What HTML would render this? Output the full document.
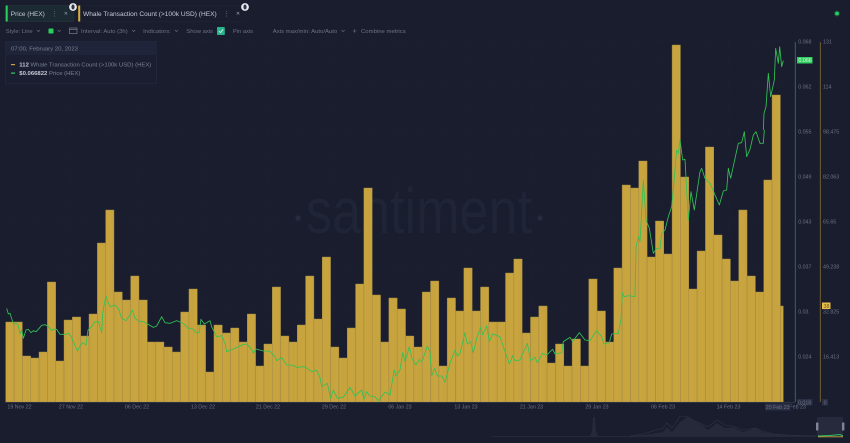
<!DOCTYPE html>
<html>
<head>
<meta charset="utf-8">
<style>
html,body{margin:0;padding:0;background:#191d2e;width:850px;height:443px;overflow:hidden}
#w{position:relative;width:850px;height:443px;filter:blur(.35px)}
svg{position:absolute;left:0;top:0}
text{font-family:"Liberation Sans",sans-serif}
.a{font-size:5.3px;fill:#6d7286}
.t{font-size:5.9px;fill:#6d7286}
.c{fill:none;stroke:#6d7286;stroke-width:.6}
</style>
</head>
<body>
<div id="w">
<svg width="850" height="443" viewBox="0 0 850 443" xmlns="http://www.w3.org/2000/svg">
<defs>
<pattern id="st" patternUnits="userSpaceOnUse" width="0.125" height="10">
<rect width="0.125" height="10" fill="#cba63f"/>
<rect width="0.025" height="10" fill="#bd9a3d"/>
</pattern>
</defs>
<rect width="850" height="443" fill="#191d2e"/>

<!-- grid -->
<g stroke="#20243a" stroke-width=".6" stroke-dasharray="1.5 1.5" fill="none">
<path d="M5 41H795M5 86H795M5 131H795M5 176H795M5 221H795M5 266H795M5 311H795M5 356H795"/>
<path d="M71 41V402M137 41V402M203 41V402M268 41V402M334 41V402M400 41V402M466 41V402M531.5 41V402M597 41V402M663 41V402M728.5 41V402"/>
</g>

<!-- watermark -->
<text x="306" y="233" font-size="64" textLength="226" lengthAdjust="spacingAndGlyphs" fill="#202437">santiment</text>
<circle cx="298" cy="218" r="2.6" fill="#272b3e"/>
<circle cx="540" cy="218" r="2.6" fill="#272b3e"/>

<!-- bars -->
<g transform="translate(5.7,0) scale(8.33,1)">
<path fill="url(#st)" stroke="#a08a45" stroke-width=".45" vector-effect="non-scaling-stroke" d="
M0 322H1V402H0zM1 322H2V402H1zM2 356H3V402H2zM3 358H4V402H3zM4 352H5V402H4zM5 282H6V402H5zM6 361H7V402H6zM7 320H8V402H7zM8 317H9V402H8zM9 336H10V402H9z
M10 314H11V402H10zM11 243H12V402H11zM12 210H13V402H12zM13 292H14V402H13zM14 300H15V402H14zM15 276H16V402H15zM16 300H17V402H16zM17 342H18V402H17zM18 342H19V402H18zM19 347H20V402H19z
M20 352H21V402H20zM21 312H22V402H21zM22 289H23V402H22zM23 325H24V402H23zM24 372H25V402H24zM25 325H26V402H25zM26 333H27V402H26zM27 328H28V402H27zM28 342H29V402H28zM29 314H30V402H29z
M30 366H31V402H30zM31 344H32V402H31zM32 287H33V402H32zM33 336H34V402H33zM34 342H35V402H34zM35 325H36V402H35zM36 276H37V402H36zM37 319H38V402H37zM38 257H39V402H38zM39 347H40V402H39z
M40 358H41V402H40zM41 328H42V402H41zM42 284H43V402H42zM43 188H44V402H43zM44 295H45V402H44zM45 342H46V402H45zM46 298H47V402H46zM47 309H48V402H47zM48 336H49V402H48zM49 347H50V402H49z
M50 292H51V402H50zM51 281H52V402H51zM52 366H53V402H52zM53 298H54V402H53zM54 311H55V402H54zM55 268H56V402H55zM56 311H57V402H56zM57 287H58V402H57zM58 322H59V402H58zM59 322H60V402H59z
M60 273H61V402H60zM61 259H62V402H61zM62 333H63V402H62zM63 317H64V402H63zM64 306H65V402H64zM65 363H66V402H65zM66 344H67V402H66zM67 366H68V402H67zM68 339H69V402H68zM69 366H70V402H69z
M70 279H71V402H70zM71 311H72V402H71zM72 342H73V402H72zM73 268H74V402H73zM74 185H75V402H74zM75 188H76V402H75zM76 161H77V402H76zM77 257H78V402H77zM78 221H79V402H78zM79 254H80V402H79z
M80 45H81V402H80zM81 177H82V402H81zM82 289H83V402H82zM83 251H84V402H83zM84 147H85V402H84zM85 235H86V402H85zM86 259H87V402H86zM87 281H88V402H87zM88 210H89V402H88zM89 276H90V402H89z
M90 292H91V402H90zM91 180H92V402H91zM92 95H93V402H92zM93 306H93.35V402H93z"/>
</g>
<path d="M5 402.3H795" stroke="#3b3f50" stroke-width=".7"/>

<!-- price line: coordinates in 3x crop space -->
<g fill="none" stroke="#32c255" stroke-width=".85" stroke-linejoin="round">
<polyline vector-effect="non-scaling-stroke" transform="translate(0,290) scale(.33333)" points="20,55 25,72 30,70 38,95 42,102 50,100 55,107 60,132 65,120 70,145 78,120 85,118 93,128 100,122 108,125 115,118 125,106 135,104 145,110 155,122 160,118 170,118 180,133 195,133 207,130 215,143 222,160 232,183 240,168 248,158 258,165 264,120 275,110 285,95 295,95 305,128 308,70 313,40 318,17 323,35 330,50 345,45 355,55 365,85 378,92 390,75 397,60 405,85 420,95 430,95 445,103 460,112 470,108 485,80 495,98 510,100 530,92 550,100 565,115 580,117 588,128 597,128 603,88 613,102 630,92"/>
<polyline vector-effect="non-scaling-stroke" transform="translate(210,290) scale(.33333)" points="0,92 5,110 20,140 35,137 45,160 50,185 58,182 75,175 95,165 110,162 125,178 130,190 138,177 160,183 180,184 195,200 200,212 215,203 230,225 250,226 260,232 285,230 305,245 320,240 330,262 335,290 352,280 362,325 370,300 382,325 400,322 420,292 435,318 455,300 462,328 470,305 480,318 495,320 505,332 525,306 540,315 553,240 558,258 570,240 578,188 585,215 598,170 606,205 618,225 630,205"/>
<polyline vector-effect="non-scaling-stroke" transform="translate(420,290) scale(.33333)" points="0,215 8,210 22,168 30,185 35,258 44,235 52,258 65,258 75,277 90,220 105,180 112,198 120,190 135,128 142,162 152,155 160,188 170,145 182,112 188,135 200,108 208,155 218,132 240,140 255,185 268,222 278,197 285,212 300,210 322,160 332,212 345,202 352,218 368,190 380,195 398,178 405,192 425,188 430,155 450,142 458,155 478,128 495,150 510,152 530,122 545,140 552,162 568,158 575,132 595,130 603,90 607,10"/>
<polyline vector-effect="non-scaling-stroke" transform="translate(610,130) scale(.33333)" points="37,487 42,500 55,497 75,500 78,350 85,320 90,335 100,150 108,270 118,295 130,370 140,355 150,355 155,310 165,300 175,260 185,230 192,155 200,60 205,70 210,30 218,90 225,88 230,180 235,270 243,185 253,240 270,125 275,115 285,145 300,160 315,195 328,225 340,183 350,180 355,115 362,145 385,40 395,38 403,5 410,80 420,58 430,15 438,5 450,40 460,40 463,0"/>
<polyline vector-effect="non-scaling-stroke" transform="translate(640,0) scale(.33333)" points="370,390 372,340 378,320 385,220 392,290 403,240 407,145 415,190 419,140 425,200 430,182"/>
</g>

<!-- axes -->
<path d="M795.3 42V402" stroke="#1f7f4a" stroke-width=".9"/>
<path d="M820.3 42V402" stroke="#7a6431" stroke-width=".9"/>
<text class="a" x="798.2" y="43.3">0.068</text>
<text class="a" x="798.2" y="88.3">0.062</text>
<text class="a" x="798.2" y="133.3">0.055</text>
<text class="a" x="798.2" y="178.3">0.049</text>
<text class="a" x="798.2" y="223.3">0.043</text>
<text class="a" x="798.2" y="268.3">0.037</text>
<text class="a" x="798.2" y="313.3">0.03</text>
<text class="a" x="798.2" y="358.3">0.024</text>
<text class="a" x="823" y="43.3">131</text>
<text class="a" x="823" y="88.3">114</text>
<text class="a" x="823" y="133.3">98.475</text>
<text class="a" x="823" y="178.3">82.063</text>
<text class="a" x="823" y="223.3">65.65</text>
<text class="a" x="823" y="268.3">49.238</text>
<text class="a" x="823" y="313.3">32.825</text>
<text class="a" x="823" y="358.3">16.413</text>
<rect x="797" y="57" width="15.5" height="6.5" fill="#2fcf5e"/>
<text x="798.5" y="62.2" font-size="5.3" fill="#d6f5df">0.066</text>
<rect x="822" y="302.5" width="8.5" height="6.5" fill="#e8c04a"/>
<text x="823.5" y="307.8" font-size="5.3" fill="#6b5520">38</text>
<rect x="797" y="399" width="15.5" height="6.5" fill="#2a2f45"/>
<text class="a" x="798" y="404.3">0.018</text>
<rect x="822" y="399" width="6" height="6.5" fill="#2a2f45"/>
<text class="a" x="823.6" y="404.3">0</text>

<!-- dates -->
<g text-anchor="middle">
<text class="a" x="19.5" y="408.6">19 Nov 22</text>
<text class="a" x="71" y="408.6">27 Nov 22</text>
<text class="a" x="137" y="408.6">06 Dec 22</text>
<text class="a" x="203" y="408.6">13 Dec 22</text>
<text class="a" x="268" y="408.6">21 Dec 22</text>
<text class="a" x="334" y="408.6">29 Dec 22</text>
<text class="a" x="400" y="408.6">06 Jan 23</text>
<text class="a" x="466" y="408.6">13 Jan 23</text>
<text class="a" x="531.5" y="408.6">21 Jan 23</text>
<text class="a" x="597" y="408.6">29 Jan 23</text>
<text class="a" x="663" y="408.6">06 Feb 23</text>
<text class="a" x="728.5" y="408.6">14 Feb 23</text>
<text class="a" x="794" y="408.6">22 Feb 23</text>
<rect x="765" y="403.5" width="25.5" height="7" fill="#2a2f45"/>
<text class="a" x="777.7" y="408.8">20 Feb 23</text>
</g>

<!-- minimap -->
<path fill="#252939" d="M492 436H590L592 431L593 417L595 417L596 431L598 436H630L643 435L663 432L667 427L672 432L680 422L687 417L693 420L702 425L708 430L717 423L725 428L733 427L743 432L755 428L763 432L773 434L787 435L817 436V437H492z"/>
<path fill="none" stroke="#2f3448" stroke-width=".6" d="M630 436L643 434L663 428L667 423L672 428L680 416L687 416.5L693 420L702 424L708 427L717 420L725 425L733 426L743 430L755 428L763 431L773 434L787 435L817 436"/>
<rect x="817" y="417" width="26" height="19.5" fill="#262a3c"/>
<path d="M818 436L830 435.5L840 434.5L843 436" stroke="#2fc45a" stroke-width="1" fill="none"/>
<path d="M818 436.8H843" stroke="#c9a23f" stroke-width=".9"/>
<rect x="816" y="422.5" width="2.4" height="8" rx=".6" fill="#7f8498"/>
<rect x="842" y="422.5" width="2.4" height="8" rx=".6" fill="#7f8498"/>

<!-- tabs -->
<rect x="5.5" y="5.5" width="68.5" height="16" rx="1.5" fill="#1c2a33" stroke="#20353a" stroke-width=".7"/>
<rect x="5.7" y="5.5" width="2" height="16" fill="#2bd05c"/>
<text x="10.8" y="16" font-size="6.4" textLength="34" lengthAdjust="spacingAndGlyphs" fill="#c6cad6">Price (HEX)</text>
<g fill="#6d7286"><circle cx="54.6" cy="11.2" r=".5"/><circle cx="54.6" cy="13.6" r=".5"/><circle cx="54.6" cy="16" r=".5"/></g>
<path d="M64.6 11.9l2.6 2.6m0-2.6l-2.6 2.6" stroke="#8a8fa2" stroke-width=".6"/>
<rect x="78" y="5.5" width="167" height="16" rx="1.5" fill="#191d2e" stroke="#1f2334" stroke-width=".7"/>
<rect x="78.2" y="5.5" width="2" height="16" fill="#d9ad3e"/>
<text x="83" y="16" font-size="6.6" textLength="133.7" lengthAdjust="spacingAndGlyphs" fill="#c6cad6">Whale Transaction Count (&gt;100k USD) (HEX)</text>
<g fill="#6d7286"><circle cx="226.6" cy="11.2" r=".5"/><circle cx="226.6" cy="13.6" r=".5"/><circle cx="226.6" cy="16" r=".5"/></g>
<path d="M236.7 11.9l2.6 2.6m0-2.6l-2.6 2.6" stroke="#8a8fa2" stroke-width=".6"/>
<circle cx="73" cy="7" r="3.9" fill="#e8e9ee"/>
<ellipse cx="73" cy="7" rx="1.6" ry="2.5" fill="#31354a"/>
<circle cx="245" cy="7" r="3.9" fill="#e8e9ee"/>
<ellipse cx="245" cy="7" rx="1.6" ry="2.5" fill="#31354a"/>
<circle cx="837" cy="13.5" r="3" fill="#1c7a44" opacity=".5"/>
<circle cx="837" cy="13.5" r="1.9" fill="#22d05c"/>

<!-- toolbar -->
<text class="t" x="5.8" y="33.1" textLength="26.9" lengthAdjust="spacingAndGlyphs">Style: Line</text>
<path class="c" d="M36.8 30l1.6 1.6L40 30"/>
<rect x="48.5" y="28.5" width="5" height="5" rx=".8" fill="#2bd05c"/>
<path class="c" d="M57.6 30l1.6 1.6L60.8 30"/>
<rect x="69.5" y="28" width="7.5" height="5.6" fill="none" stroke="#858a9c" stroke-width=".6"/>
<path d="M69.5 29.6H77" stroke="#858a9c" stroke-width=".6"/>
<text class="t" x="81" y="33.1" textLength="46.7" lengthAdjust="spacingAndGlyphs">Interval: Auto (3h)</text>
<path class="c" d="M132 30l1.6 1.6L135.2 30"/>
<text class="t" x="143.2" y="33.1" textLength="27.8" lengthAdjust="spacingAndGlyphs">Indicators:</text>
<path class="c" d="M174.8 30l1.6 1.6L178 30"/>
<text class="t" x="186.3" y="33.1" textLength="26.7" lengthAdjust="spacingAndGlyphs">Show axis</text>
<rect x="217" y="27" width="7.8" height="8" rx=".8" fill="#27b58a"/>
<path d="M219 31l1.6 1.6 2.4-3.2" fill="none" stroke="#e8f7f0" stroke-width=".8"/>
<text class="t" x="233" y="33.1" textLength="20" lengthAdjust="spacingAndGlyphs">Pin axis</text>
<text class="t" x="272.8" y="33.1" textLength="64.4" lengthAdjust="spacingAndGlyphs">Axis max/min: Auto/Auto</text>
<path class="c" d="M341.5 30l1.6 1.6L344.7 30"/>
<path class="c" d="M353 31h3.4M354.7 29.3v3.4"/>
<text class="t" x="361" y="33.1" textLength="44.7" lengthAdjust="spacingAndGlyphs">Combine metrics</text>

<!-- tooltip -->
<rect x="5.5" y="41.3" width="151" height="42" fill="#1a1e30" stroke="#252a3e" stroke-width=".7"/>
<rect x="5.8" y="41.6" width="150.4" height="13.5" fill="#20243a"/>
<text x="11" y="50.5" font-size="5.9" textLength="67" lengthAdjust="spacingAndGlyphs" fill="#7b8094">07:00, February 20, 2023</text>
<rect x="11" y="64" width="4" height="1.2" fill="#c9a23f"/>
<text x="19.3" y="66.7" font-size="5.9" textLength="132" lengthAdjust="spacingAndGlyphs" fill="#7b8094"><tspan fill="#c6cad6" font-weight="bold">112</tspan> Whale Transaction Count (&gt;100k USD) (HEX)</text>
<rect x="11" y="72.5" width="4" height="1.2" fill="#2bd05c"/>
<text x="19.3" y="75.2" font-size="5.9" textLength="61" lengthAdjust="spacingAndGlyphs" fill="#7b8094"><tspan fill="#c6cad6" font-weight="bold">$0.066822</tspan> Price (HEX)</text>
</svg>
</div>
</body>
</html>
